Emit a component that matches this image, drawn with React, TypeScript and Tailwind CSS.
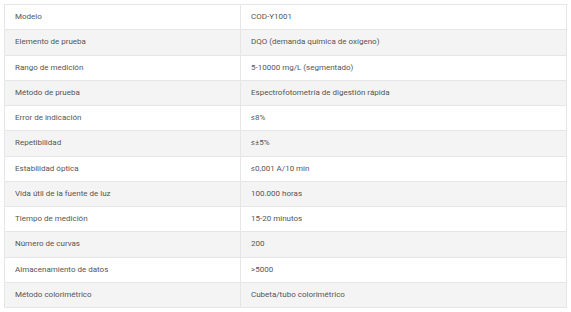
import React from "react";

const specs: [string, string][] = [
  ["Modelo", "COD-Y1001"],
  ["Elemento de prueba", "DQO (demanda química de oxígeno)"],
  ["Rango de medición", "5-10000 mg/L (segmentado)"],
  ["Método de prueba", "Espectrofotometría de digestión rápida"],
  ["Error de indicación", "≤8%"],
  ["Repetibilidad", "≤±5%"],
  ["Estabilidad óptica", "≤0,001 A/10 min"],
  ["Vida útil de la fuente de luz", "100.000 horas"],
  ["Tiempo de medición", "15-20 minutos"],
  ["Número de curvas", "200"],
  ["Almacenamiento de datos", ">5000"],
  ["Método colorimétrico", "Cubeta/tubo colorimétrico"],
];

const App: React.FC = () => {
  return (
    <div className="w-[571px] h-[312px] bg-white overflow-hidden pt-[4px] pl-[4px] font-['Roboto',sans-serif]">
      <div className="w-[563px] border-t border-l border-r border-[#e6e6e6]">
        {specs.map(([label, value], i) => (
          <div
            key={label}
            className={`grid grid-cols-[236px_1fr] h-[25.25px] border-b border-[#e6e6e6] text-[8px] text-[#555] ${
              i % 2 === 1 ? "bg-[#f4f4f4]" : "bg-white"
            }`}
          >
            <div className="flex items-center pl-[10px] border-r border-[#e6e6e6]">
              {label}
            </div>
            <div className="flex items-center pl-[10px]">{value}</div>
          </div>
        ))}
      </div>
    </div>
  );
};

export default App;
